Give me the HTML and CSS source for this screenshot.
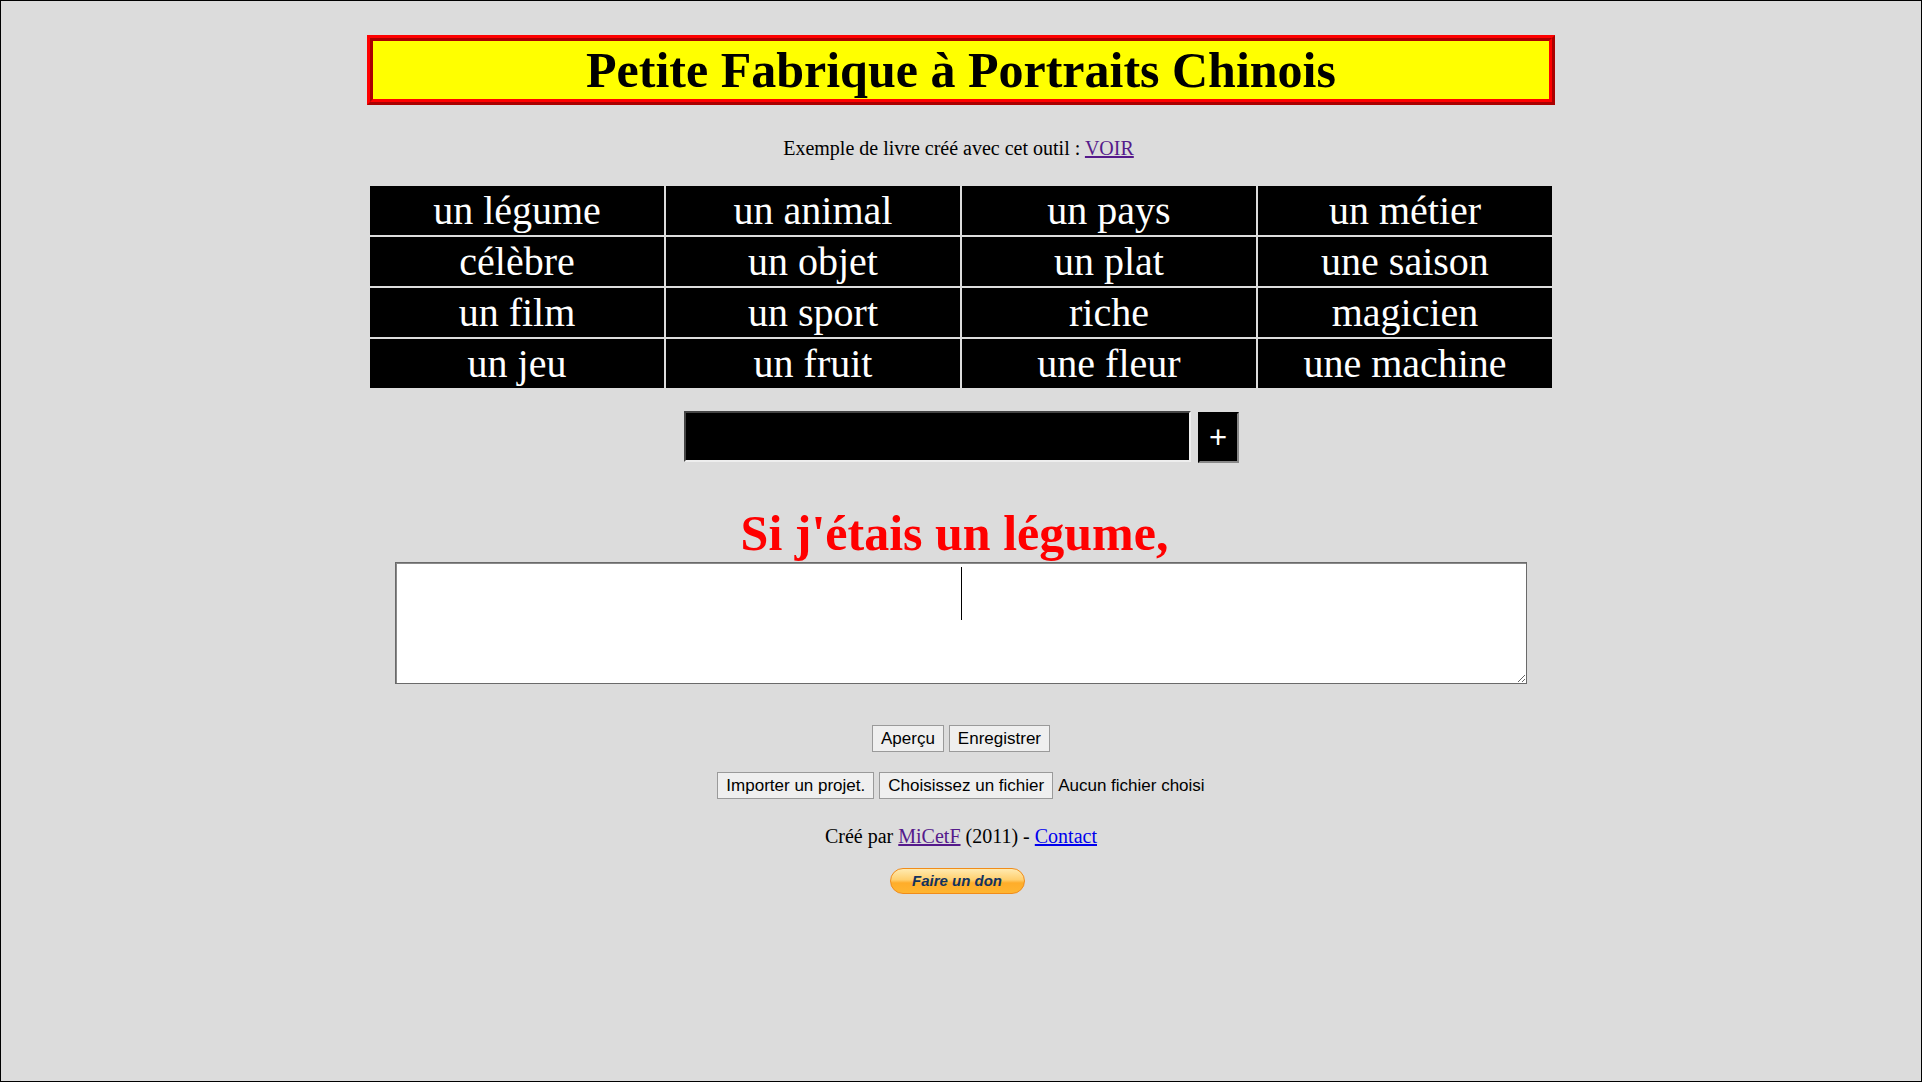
FILE: index.html
```html
<!DOCTYPE html>
<html lang="fr">
<head>
<meta charset="utf-8">
<title>Petite Fabrique à Portraits Chinois</title>
<link rel="stylesheet" href="styles.css">
</head>
<body>
<div class="page">
  <h1 class="title">Petite Fabrique à Portraits Chinois</h1>
  <p class="example">Exemple de livre créé avec cet outil : <a class="visited" href="#">VOIR</a></p>
  <table class="grid">
    <tr><td>un légume</td><td>un animal</td><td>un pays</td><td>un métier</td></tr>
    <tr><td>célèbre</td><td>un objet</td><td>un plat</td><td>une saison</td></tr>
    <tr><td>un film</td><td>un sport</td><td>riche</td><td>magicien</td></tr>
    <tr><td>un jeu</td><td>un fruit</td><td>une fleur</td><td>une machine</td></tr>
  </table>
  <div class="adder">
    <input class="word" type="text">
    <button class="plus">+</button>
  </div>
  <h2 class="prompt">Si j'étais un légume,</h2>
  <div class="editor">
    <textarea class="answer"></textarea>
    <span class="caret"></span>
  </div>
  <div class="actions">
    <button class="btn">Aperçu</button>
    <button class="btn">Enregistrer</button>
  </div>
  <div class="actions import">
    <button class="btn">Importer un projet.</button>
    <span class="btn">Choisissez un fichier</span>
    <span class="nofile">Aucun fichier choisi</span>
  </div>
  <p class="credits">Créé par <a class="visited" href="#">MiCetF</a> (2011) - <a class="link" href="#">Contact</a></p>
  <div class="donate"><span class="paypal">Faire un don</span></div>
</div>
</body>
</html>
```
FILE: styles.css
```css
html, body {
  margin: 0;
  padding: 0;
}
body {
  background: #dcdcdc;
  border: 1px solid #000;
  box-sizing: border-box;
  min-height: 100vh;
  font-family: "Liberation Serif", "Times New Roman", serif;
  color: #000;
}
.page {
  width: 1188px;
  margin: 0 auto;
  display: flex;
  flex-direction: column;
  align-items: center;
}
.title {
  width: 100%;
  box-sizing: border-box;
  margin: 34px 0 0;
  background: #ffff00;
  border: 6px ridge #ff0000;
  font-size: 50px;
  font-weight: bold;
  line-height: 58px;
  text-align: center;
}
.example {
  margin: 32px 0 0;
  padding-right: 5px;
  font-size: 20px;
  line-height: 23px;
}
.visited { color: #551a8b; }
.link { color: #0000ee; }
.grid {
  margin-top: 24px;
  width: 1186px;
  border-spacing: 2px;
  table-layout: fixed;
}
.grid td {
  background: #000;
  color: #fff;
  font-size: 40px;
  line-height: 47px;
  padding: 1px;
  text-align: center;
}
.adder {
  margin-top: 21px;
  display: flex;
  gap: 7px;
  align-items: flex-start;
}
.word {
  width: 507px;
  height: 51px;
  box-sizing: border-box;
  background: #000;
  color: #fff;
  border: 2px inset #eee;
  border-top-color: #999;
  border-left-color: #999;
  margin: 0;
}
.plus {
  width: 41px;
  height: 51px;
  margin: 1px 0 0;
  box-sizing: border-box;
  background: #000;
  color: #fff;
  border: 2px solid #000;
  border-right-color: #888;
  border-bottom-color: #888;
  font-family: "Liberation Sans", Arial, sans-serif;
  font-size: 31px;
  line-height: 1;
  padding: 0;
}
.prompt {
  margin: 41px 0 0;
  padding-right: 13px;
  color: #ff0000;
  font-size: 50px;
  font-weight: bold;
  line-height: 58px;
}
.editor {
  position: relative;
  width: 1132px;
  height: 122px;
}
.answer {
  display: block;
  width: 1132px;
  height: 122px;
  box-sizing: border-box;
  margin: 0;
  background: #fff;
  border: 1px solid #6a6a6a;
  box-shadow: inset 1px 1px 0 #8a8a8a;
}
.caret {
  position: absolute;
  left: 566px;
  top: 5px;
  width: 1px;
  height: 53px;
  background: #000;
}
.actions {
  margin-top: 41px;
  display: flex;
  gap: 5px;
  align-items: center;
  font-family: "Liberation Sans", Arial, sans-serif;
  font-size: 17px;
}
.import {
  margin-top: 20px;
}
.btn {
  display: inline-block;
  box-sizing: border-box;
  height: 27px;
  padding: 3px 8px;
  background: #efefef;
  border: 1px solid #9a9a9a;
  font-family: "Liberation Sans", Arial, sans-serif;
  font-size: 17px;
  line-height: 19px;
  color: #000;
}
.nofile {
  color: #000;
}
.credits {
  margin: 26px 0 0;
  font-size: 20px;
  line-height: 23px;
}
.donate {
  margin-top: 20px;
  padding-right: 8px;
}
.paypal {
  display: block;
  width: 135px;
  height: 26px;
  box-sizing: border-box;
  border: 1px solid #f08c1a;
  border-radius: 13px;
  background: linear-gradient(#ffeab0 0%, #ffcf6e 45%, #ffad2a 58%, #ffb530 100%);
  color: #13335e;
  font-family: "Liberation Sans", Arial, sans-serif;
  font-size: 15px;
  font-weight: bold;
  font-style: italic;
  line-height: 24px;
  text-align: center;
}
```
